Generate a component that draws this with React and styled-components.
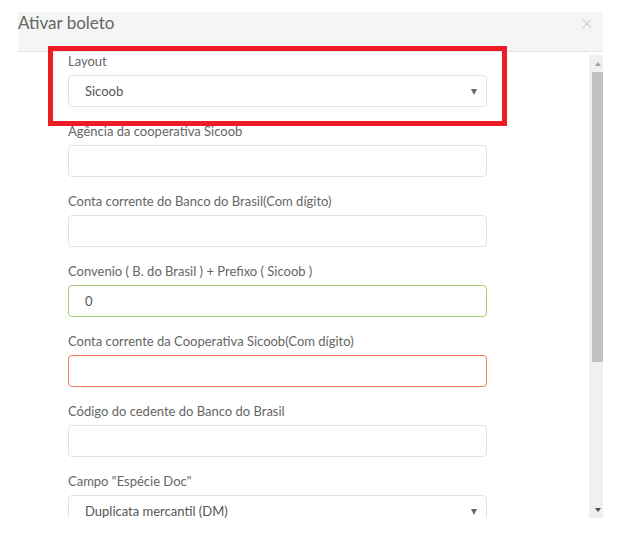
import React from "react";
import styled, { createGlobalStyle } from "styled-components";

const Global = createGlobalStyle`
  html, body { margin: 0; padding: 0; background: #fff; }
  body { font-family: Lato, "Open Sans", sans-serif; width: 633px; height: 548px; overflow: hidden; }
`;

const Page = styled.div`
  position: relative;
  padding: 12px 0 0 18px;
`;

const Modal = styled.div`
  width: 585px;
  display: flex;
  flex-direction: column;
`;

const Header = styled.div`
  height: 39px;
  background: #f5f5f5;
  border-bottom: 1px solid #e5e5e5;
  display: flex;
  align-items: flex-start;
  justify-content: space-between;
`;

const Title = styled.h4`
  margin: 0;
  font-size: 17px;
  line-height: 22px;
  font-weight: 400;
  color: #666;
`;

const Close = styled.span`
  font-size: 21px;
  line-height: 22px;
  font-weight: 300;
  color: #c4c4c4;
  margin-right: 10px;
`;

const BodyRow = styled.div`
  height: 466px;
  display: flex;
`;

const Scroller = styled.div`
  flex: 1;
  overflow: hidden;
  padding-left: 50px;
`;

const Group = styled.div`
  width: 419px;
  margin-bottom: 15px;
`;

const Label = styled.label`
  display: block;
  font-size: 13px;
  line-height: 18px;
  color: #666;
  margin-bottom: 5px;
`;

const borderFor = (s) =>
  s === "ok" ? "#a3cb73" : s === "error" ? "#f47c5c" : "#e3e3e3";

const Field = styled.div`
  box-sizing: border-box;
  height: 32px;
  border: 1px solid ${(p) => borderFor(p.$state)};
  border-radius: 4px;
  background: #fff;
  display: flex;
  align-items: center;
  justify-content: space-between;
  padding: 0 9px 0 16px;
  font-size: 13px;
  color: #555;
`;

const Arrow = styled.span`
  width: 0;
  height: 0;
  border-left: 3.5px solid transparent;
  border-right: 3.5px solid transparent;
  border-top: 6px solid #666;
  margin-top: 1px;
`;

const ScrollTrack = styled.div`
  width: 14px;
  margin-top: 3px;
  background: #f0f0f0;
  display: flex;
  flex-direction: column;
  align-items: flex-end;
`;

const ScrollBtn = styled.div`
  width: 11px;
  height: 17px;
  display: flex;
  align-items: center;
  justify-content: center;
`;

const Tri = styled.span`
  width: 0;
  height: 0;
  border-left: 3.5px solid transparent;
  border-right: 3.5px solid transparent;
  ${(p) =>
    p.$up
      ? `border-bottom: 4px solid #a3a3a3;`
      : `border-top: 4px solid #505050;`}
`;

const Thumb = styled.div`
  width: 11px;
  height: 290px;
  background: #c1c1c1;
`;

const Spacer = styled.div`
  flex: 1;
`;

const Highlight = styled.div`
  position: absolute;
  left: 48px;
  top: 46px;
  width: 459px;
  height: 80px;
  box-sizing: border-box;
  border: 5px solid #ee1c25;
  pointer-events: none;
`;

const fields = [
  { label: "Layout", value: "Sicoob", select: true },
  { label: "Agência da cooperativa Sicoob", value: "" },
  { label: "Conta corrente do Banco do Brasil(Com dígito)", value: "" },
  { label: "Convenio ( B. do Brasil ) + Prefixo ( Sicoob )", value: "0", state: "ok" },
  { label: "Conta corrente da Cooperativa Sicoob(Com dígito)", value: "", state: "error" },
  { label: "Código do cedente do Banco do Brasil", value: "" },
  { label: 'Campo "Espécie Doc"', value: "Duplicata mercantil (DM)", select: true },
];

export default function App() {
  return (
    <>
      <Global />
      <Page>
        <Modal>
          <Header>
            <Title>Ativar boleto</Title>
            <Close>×</Close>
          </Header>
          <BodyRow>
            <Scroller>
              {fields.map((f) => (
                <Group key={f.label}>
                  <Label>{f.label}</Label>
                  <Field $state={f.state}>
                    <span>{f.value}</span>
                    {f.select && <Arrow />}
                  </Field>
                </Group>
              ))}
            </Scroller>
            <ScrollTrack>
              <ScrollBtn>
                <Tri $up />
              </ScrollBtn>
              <Thumb />
              <Spacer />
              <ScrollBtn>
                <Tri />
              </ScrollBtn>
            </ScrollTrack>
          </BodyRow>
        </Modal>
        <Highlight />
      </Page>
    </>
  );
}
